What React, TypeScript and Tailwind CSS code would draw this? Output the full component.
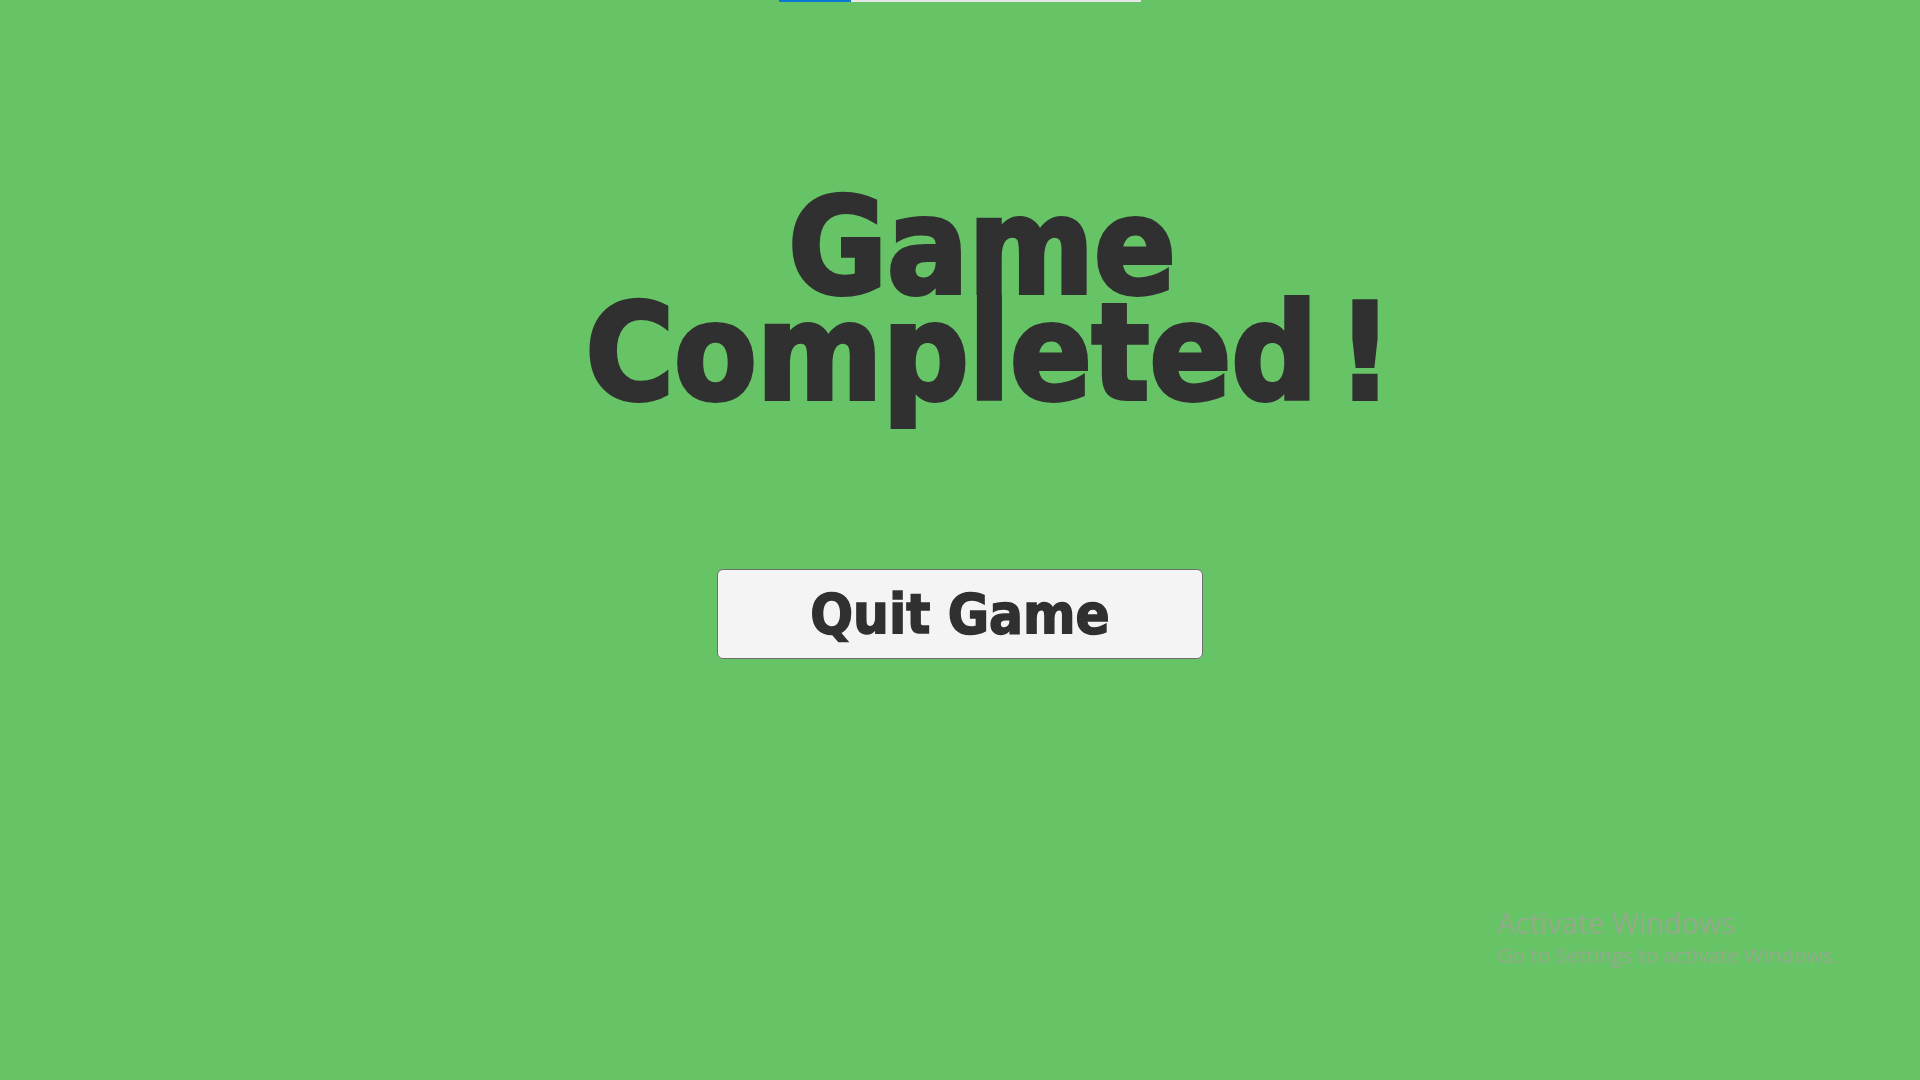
import React from 'react';

const App = () => {
  return (
    <main className="relative min-h-screen w-full bg-[#67c466] flex flex-col items-center overflow-hidden">
      {/* progress bar up top */}
      <div className="flex w-[362px] h-[2px] bg-[#e6e6e6]">
        <div className="w-[72px] h-full bg-[#0a78d4]" />
      </div>

      <h1 className="mt-[192px] flex flex-col items-center text-[134px] leading-[106px] font-bold font-stretch-condensed [-webkit-text-stroke:4px_#303030] text-[#303030] font-[family-name:'DejaVu_Sans_Condensed','DejaVu_Sans',sans-serif]">
        <span className="pl-[44px]">Game</span>
        <span className="pl-[58px] [word-spacing:-22px]">Completed !</span>
      </h1>

      <button className="mt-[163px] w-[486px] h-[90px] flex items-center justify-center bg-[#f4f4f4] border border-[#6f6f6f] rounded-[6px] text-[56px] font-bold font-stretch-condensed [-webkit-text-stroke:1.5px_#303030] text-[#303030] font-[family-name:'DejaVu_Sans_Condensed','DejaVu_Sans',sans-serif]">
        Quit Game
      </button>

      {/* windows watermark */}
      <div className="absolute left-[1497px] top-[904px] text-[#92ab8b] font-[family-name:'Open_Sans','Noto_Sans',sans-serif]">
        <p className="text-[29px] leading-[38px]">Activate Windows</p>
        <p className="text-[20.8px] leading-[26px]">Go to Settings to activate Windows.</p>
      </div>
    </main>
  );
};

export default App;
